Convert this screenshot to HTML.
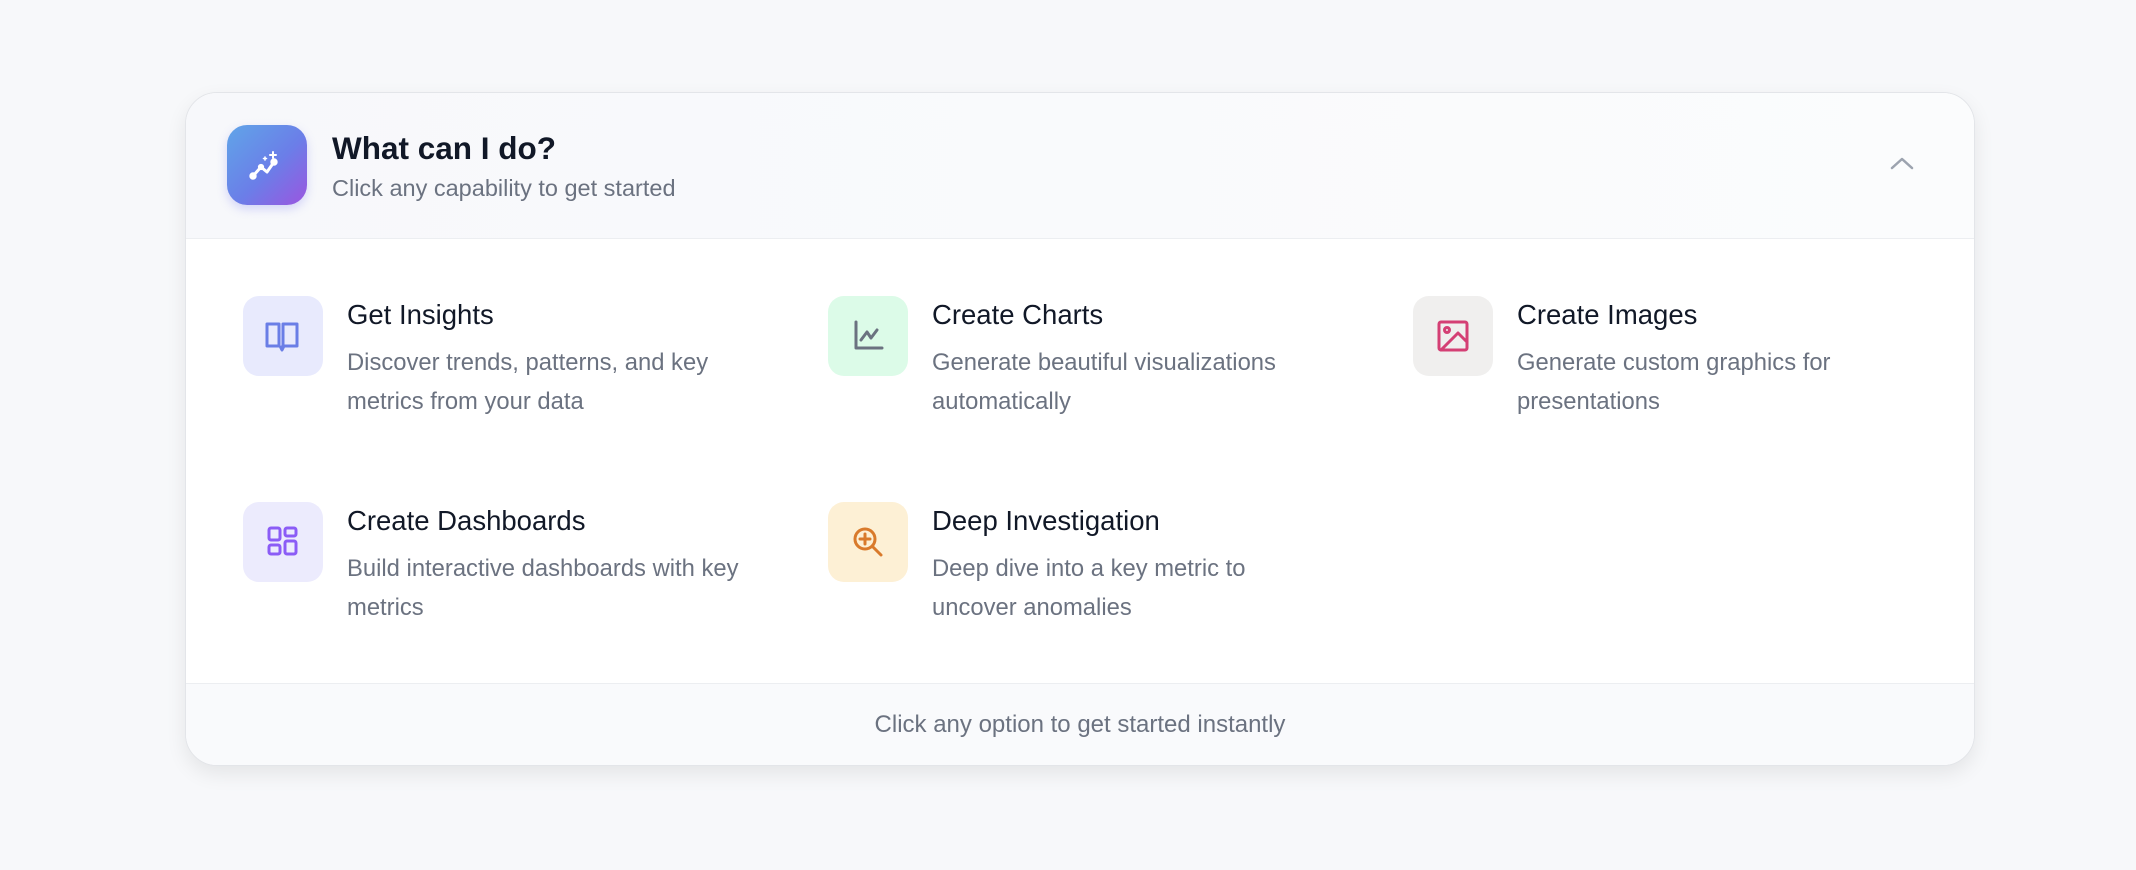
<!DOCTYPE html>
<html><head><meta charset="utf-8"><style>
*{box-sizing:border-box;margin:0;padding:0}
body{width:2136px;height:870px;background:#f7f8fa;font-family:"Liberation Sans",Helvetica,Arial,sans-serif;position:relative;overflow:hidden}
.card{position:absolute;left:185px;top:92px;width:1790px;height:674px;background:#fff;border:1.5px solid #e3e5e9;border-radius:32px;box-shadow:0 8px 20px rgba(0,0,0,0.08);overflow:hidden}
.head{position:absolute;left:0;top:0;right:0;height:146px;background:linear-gradient(90deg,#f7f8fb,#fbfcfd);border-bottom:1.5px solid #eceef1}
.logo{position:absolute;left:41px;top:32px;width:80px;height:80px;border-radius:20px;background:linear-gradient(135deg,#60a5e8 0%,#6b7ee8 55%,#9b55e0 100%);box-shadow:0 4px 10px rgba(99,102,241,0.25)}
.title{position:absolute;left:146px;top:37px;font-size:31.5px;font-weight:bold;color:#111827}
.sub{position:absolute;left:146px;top:82px;font-size:23.5px;color:#6b7280}
.chev{position:absolute;left:1701px;top:60px}
.item{position:absolute;width:540px;height:170px}
.ib{position:absolute;left:0;top:0;width:80px;height:80px;border-radius:16px;display:flex;align-items:center;justify-content:center}
.it{position:absolute;left:104px;top:3px;font-size:27.5px;color:#111827}
.id{position:absolute;left:104px;top:47px;font-size:23.8px;line-height:39px;color:#6b7280;width:400px}
.foot{position:absolute;left:0;right:0;bottom:0;height:82px;background:#f9fafc;border-top:1.5px solid #eceef1;text-align:center;font-size:24px;color:#6b7280;line-height:82px}
</style></head><body>
<div class="card">
 <div class="head">
  <div class="logo"><svg width="80" height="80" viewBox="0 0 80 80" fill="none" stroke="#fff" stroke-width="3" stroke-linecap="round" stroke-linejoin="round"><path d="M26 51 L34 42 L40 47 L47 37"/><circle cx="26" cy="51" r="2.2" fill="#fff"/><circle cx="47" cy="37" r="2.2" fill="#fff"/><circle cx="34" cy="42" r="1.6" fill="#fff"/><path d="M46 27v6M43 30h6" stroke-width="2"/><path d="M38 32v3M36.5 33.5h3" stroke-width="1.6"/></svg></div>
  <div class="title">What can I do?</div>
  <div class="sub">Click any capability to get started</div>
  <svg class="chev" width="30" height="20" viewBox="0 0 30 20" fill="none" stroke="#9ca3af" stroke-width="2.5" stroke-linecap="round" stroke-linejoin="round"><path d="M5 15 L15 6 L25 15"/></svg>
 </div>

 <div class="item" style="left:57px;top:203px">
  <div class="ib" style="background:#e8eafd"><svg width="40" height="40" viewBox="0 0 40 40" fill="none" stroke="#6a7ee6" stroke-width="3" stroke-linejoin="round"><path d="M4 8h12v22H4zM20 8h14v22H20z"/><path d="M17 30l2 4 2-4"/></svg></div>
  <div class="it">Get Insights</div>
  <div class="id">Discover trends, patterns, and key metrics from your data</div>
 </div>
 <div class="item" style="left:642px;top:203px">
  <div class="ib" style="background:#dcfbe8"><svg width="40" height="40" viewBox="0 0 40 40" fill="none" stroke="#6b7280" stroke-width="3" stroke-linecap="round" stroke-linejoin="round"><path d="M8 6v26h26"/><path d="M13 24l6-8 4 6 6-8"/></svg></div>
  <div class="it">Create Charts</div>
  <div class="id">Generate beautiful visualizations automatically</div>
 </div>
 <div class="item" style="left:1227px;top:203px">
  <div class="ib" style="background:#f0efee"><svg width="40" height="40" viewBox="0 0 40 40" fill="none" stroke="#d43f74" stroke-width="3" stroke-linecap="round" stroke-linejoin="round"><rect x="6" y="6" width="28" height="28" rx="2"/><circle cx="14" cy="14" r="2.5"/><path d="M34 26l-9-9L8 34"/></svg></div>
  <div class="it">Create Images</div>
  <div class="id">Generate custom graphics for presentations</div>
 </div>
 <div class="item" style="left:57px;top:409px">
  <div class="ib" style="background:#ecebfd"><svg width="40" height="40" viewBox="0 0 40 40" fill="none" stroke="#8b5cf6" stroke-width="3" stroke-linejoin="round"><rect x="6" y="6" width="11" height="12" rx="2"/><rect x="22" y="6" width="11" height="8" rx="2"/><rect x="6" y="23" width="11" height="9" rx="2"/><rect x="22" y="19" width="11" height="13" rx="2"/></svg></div>
  <div class="it">Create Dashboards</div>
  <div class="id">Build interactive dashboards with key metrics</div>
 </div>
 <div class="item" style="left:642px;top:409px">
  <div class="ib" style="background:#fdf0d5"><svg width="40" height="40" viewBox="0 0 40 40" fill="none" stroke="#d97a2b" stroke-width="3" stroke-linecap="round" stroke-linejoin="round"><circle cx="17" cy="17" r="10"/><path d="M25 25l8 8M17 12v10M12 17h10"/></svg></div>
  <div class="it">Deep Investigation</div>
  <div class="id">Deep dive into a key metric to uncover anomalies</div>
 </div>

 <div class="foot">Click any option to get started instantly</div>
</div>
</body></html>
